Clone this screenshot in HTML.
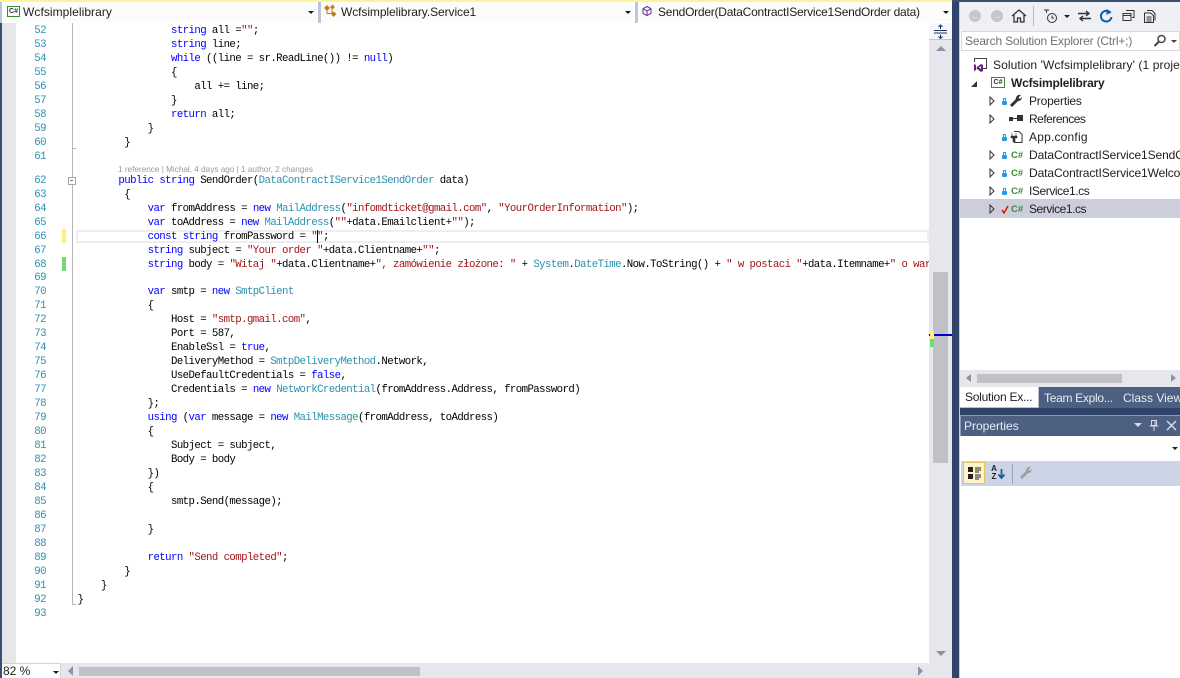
<!DOCTYPE html>
<html><head><meta charset="utf-8"><style>
html,body{margin:0;padding:0;background:#fff}
#r{position:relative;width:1180px;height:678px;overflow:hidden;background:#fff;font-family:"Liberation Sans",sans-serif}
.a{position:absolute}
.ui{position:absolute;font-size:12px;white-space:nowrap;color:#1e1e1e;line-height:16px}
#code{position:absolute;left:77.5px;top:25px;width:852px;height:638px;overflow:hidden;font-family:"Liberation Mono",monospace;font-size:10.7px;letter-spacing:-.57px;line-height:13.97px;white-space:pre;color:#000}
#nums{position:absolute;left:16px;top:25px;width:30px;text-align:right;font-family:"Liberation Mono",monospace;font-size:10.7px;letter-spacing:-.52px;line-height:13.97px;white-space:pre;color:#2b91af}
.k{color:#0000ff}.t{color:#2b91af}.s{color:#a31515}
.lens{height:10px;padding-left:40.5px;font:8.2px/10px "Liberation Sans",sans-serif;letter-spacing:0;color:#999}
.combo{position:absolute;top:2px;height:19px;background:#fcfcfd;border:1px solid #fff}
.drop{position:absolute;width:0;height:0;border-left:3px solid transparent;border-right:3px solid transparent;border-top:3px solid #1e1e1e}
.exp{position:absolute;left:989px}
.lock{position:absolute;left:1002px;width:5px;height:4px;background:#1f9ce8;border-radius:1px}
.lock:before{content:"";position:absolute;left:1px;top:-3px;width:1px;height:2px;border:1px solid #1f9ce8;border-bottom:0}
.cs{position:absolute;left:1011px;font:bold 9.5px/12px "Liberation Sans",sans-serif;color:#388a34}
</style></head><body><div id="r">

<!-- top bar -->
<div class="a" style="left:0;top:0;width:952px;height:23px;background:#bcc6d9"></div>
<div class="a" style="left:0;top:0;width:952px;height:2px;background:#fff29d"></div>
<div class="combo" style="left:2px;width:314px"></div>
<div class="combo" style="left:321px;width:312px"></div>
<div class="combo" style="left:638px;width:312px"></div>
<div class="a" style="left:7px;top:6px;width:11px;height:9px;border:1px solid #388a34;font:bold 7px/9px 'Liberation Sans',sans-serif;color:#333;text-align:center">C#</div>
<div class="ui" style="left:23px;top:4px;letter-spacing:.06px">Wcfsimplelibrary</div>
<div class="drop" style="left:308px;top:11px"></div>
<svg class="a" style="left:324px;top:4px" width="14" height="14" viewBox="0 0 14 14"><path d="M0 4l3-3 3 3-3 3zM6 3l2.500-2.500L11 3 8.500 5.500zM7 10l2.500-2.500L12.500 10 9.500 13z" fill="#c27d1a"/><path d="M3 6v3.500h5M8 4v5" stroke="#c27d1a" fill="none"/></svg>
<div class="ui" style="left:341px;top:4px;letter-spacing:-.08px">Wcfsimplelibrary.Service1</div>
<div class="drop" style="left:625px;top:11px"></div>
<svg class="a" style="left:641px;top:5px" width="12" height="12" viewBox="0 0 12 12"><path d="M6 1.500l4 2.200v4.600l-4 2.200-4-2.200V3.700zM2 3.700l4 2.300 4-2.300M6 6v4.500" fill="none" stroke="#652d90" stroke-width="1"/></svg>
<div class="ui" style="left:658px;top:4px;letter-spacing:-.24px">SendOrder(DataContractIService1SendOrder data)</div>
<div class="drop" style="left:943px;top:11px"></div>

<!-- gutter -->
<div class="a" style="left:0;top:23px;width:2px;height:655px;background:#3b4f72"></div>
<div class="a" style="left:2px;top:23px;width:14px;height:640px;background:#e6e7e8"></div>
<div class="a" style="left:72px;top:23px;width:1px;height:582px;background:#b5b5b5"></div>
<div class="a" style="left:72px;top:148px;width:4px;height:1px;background:#b5b5b5"></div>
<div class="a" style="left:73px;top:604px;width:3px;height:1px;background:#b5b5b5"></div>
<div class="a" style="left:68px;top:177px;width:6px;height:6px;background:#fff;border:1px solid #a5a5a5"></div>
<div class="a" style="left:70px;top:180px;width:3px;height:1px;background:#777"></div>
<div class="a" style="left:62px;top:229px;width:4px;height:14px;background:#fff176"></div>
<div class="a" style="left:62px;top:257px;width:4px;height:14px;background:#6fdc6f"></div>
<div class="a" style="left:76px;top:230px;width:849px;height:9px;border:2px solid #eeeef2"></div>

<div id="nums">52
53
54
55
56
57
58
59
60
61
<div style="height:10px"></div>62
63
64
65
66
67
68
69
70
71
72
73
74
75
76
77
78
79
80
81
82
83
84
85
86
87
88
89
90
91
92
93</div>

<div id="code">                <span class="k">string</span> all =<span class="s">""</span>;
                <span class="k">string</span> line;
                <span class="k">while</span> ((line = sr.ReadLine()) != <span class="k">null</span>)
                {
                    all += line;
                }
                <span class="k">return</span> all;
            }
        }

<div class="lens">1 reference | Michał, 4 days ago | 1 author, 2 changes</div>       <span class="k">public</span> <span class="k">string</span> SendOrder(<span class="t">DataContractIService1SendOrder</span> data)
        {
            <span class="k">var</span> fromAddress = <span class="k">new</span> <span class="t">MailAddress</span>(<span class="s">"infomdticket@gmail.com"</span>, <span class="s">"YourOrderInformation"</span>);
            <span class="k">var</span> toAddress = <span class="k">new</span> <span class="t">MailAddress</span>(<span class="s">""</span>+data.Emailclient+<span class="s">""</span>);
            <span class="k">const</span> <span class="k">string</span> fromPassword = <span class="s">""</span>;
            <span class="k">string</span> subject = <span class="s">"Your order "</span>+data.Clientname+<span class="s">""</span>;
            <span class="k">string</span> body = <span class="s">"Witaj "</span>+data.Clientname+<span class="s">", zamówienie złożone: "</span> + <span class="t">System</span>.<span class="t">DateTime</span>.Now.ToString() + <span class="s">" w postaci "</span>+data.Itemname+<span class="s">" o wartości"</span>;

            <span class="k">var</span> smtp = <span class="k">new</span> <span class="t">SmtpClient</span>
            {
                Host = <span class="s">"smtp.gmail.com"</span>,
                Port = 587,
                EnableSsl = <span class="k">true</span>,
                DeliveryMethod = <span class="t">SmtpDeliveryMethod</span>.Network,
                UseDefaultCredentials = <span class="k">false</span>,
                Credentials = <span class="k">new</span> <span class="t">NetworkCredential</span>(fromAddress.Address, fromPassword)
            };
            <span class="k">using</span> (<span class="k">var</span> message = <span class="k">new</span> <span class="t">MailMessage</span>(fromAddress, toAddress)
            {
                Subject = subject,
                Body = body
            })
            {
                smtp.Send(message);

            }

            <span class="k">return</span> <span class="s">"Send completed"</span>;
        }
    }
}
</div>
<div class="a" style="left:317px;top:230px;width:1px;height:13px;background:#000"></div>

<!-- editor vertical scrollbar -->
<div class="a" style="left:929px;top:23px;width:23px;height:655px;background:#e6e7ec"></div>
<div class="a" style="left:929px;top:23px;width:23px;height:17px;background:#f4f6fb;border-bottom:1px solid #bcc6d9;box-sizing:border-box"></div>
<svg class="a" style="left:933px;top:24px" width="15" height="15" viewBox="0 0 15 15"><path d="M1 6.500h13M1 9h13M7.500 1v4M7.500 10.500v4M5.500 3l2-2 2 2M5.500 12.500l2 2 2-2" stroke="#1f3b5c" fill="none"/></svg>
<div class="a" style="left:936px;top:46px;border-left:5px solid transparent;border-right:5px solid transparent;border-bottom:5px solid #8f90a2"></div>
<div class="a" style="left:933px;top:272px;width:15px;height:191px;background:#c0c1c6"></div>
<div class="a" style="left:929px;top:334px;width:23px;height:2px;background:#0000d0"></div>
<div class="a" style="left:930px;top:331px;width:4px;height:8px;background:#fff176"></div>
<div class="a" style="left:930px;top:339px;width:4px;height:8px;background:#6fdc6f"></div>
<div class="a" style="left:936px;top:651px;border-left:5px solid transparent;border-right:5px solid transparent;border-top:5px solid #8f90a2"></div>

<!-- editor bottom -->
<div class="a" style="left:2px;top:663px;width:950px;height:15px;background:#e6e7ec"></div>
<div class="a" style="left:2px;top:663px;width:59px;height:15px;background:#fff;box-sizing:border-box;border-top:1px solid #ccd5e6;border-right:1px solid #ccd5e6"></div>
<div class="ui" style="left:3px;top:664px;line-height:15px">82 %</div>
<div class="drop" style="left:53px;top:671px"></div>
<div class="a" style="left:68px;top:666px;border-top:5px solid transparent;border-bottom:5px solid transparent;border-right:5px solid #8f90a2"></div>
<div class="a" style="left:79px;top:667px;width:341px;height:9px;background:#c0c1c6"></div>
<div class="a" style="left:918px;top:666px;border-top:5px solid transparent;border-bottom:5px solid transparent;border-left:5px solid #8f90a2"></div>

<!-- splitter -->
<div class="a" style="left:952px;top:0;width:7px;height:678px;background:#2f4468"></div>
<div class="a" style="left:959px;top:0;width:1px;height:678px;background:#c5cfe2"></div>

<!-- solution explorer toolbar -->
<div class="a" style="left:960px;top:0;width:220px;height:31px;background:#eef0f6"></div>
<div class="a" style="left:952px;top:0;width:228px;height:2px;background:#3b4f72"></div>
<div class="a" style="left:969px;top:10px;width:12px;height:12px;border-radius:50%;background:#c5c7cc;color:#eef0f6;font:bold 9px/12px 'Liberation Sans',sans-serif;text-align:center">←</div>
<div class="a" style="left:991px;top:10px;width:12px;height:12px;border-radius:50%;background:#c5c7cc;color:#eef0f6;font:bold 9px/12px 'Liberation Sans',sans-serif;text-align:center">→</div>
<svg class="a" style="left:1011px;top:8px" width="16" height="16" viewBox="0 0 16 16"><path d="M1 8l7-6 7 6M3 7v7h3.500v-4h3v4H13V7" fill="none" stroke="#333" stroke-width="1.300"/></svg>
<div class="a" style="left:1033px;top:6px;width:1px;height:20px;background:#b5b8c2"></div>
<svg class="a" style="left:1043px;top:8px" width="16" height="16" viewBox="0 0 16 16"><circle cx="9" cy="10" r="4.500" fill="none" stroke="#333"/><path d="M9 7.500V10h2M1 2h5M3.500 2v3" fill="none" stroke="#333"/></svg>
<div class="drop" style="left:1064px;top:15px"></div>
<svg class="a" style="left:1077px;top:9px" width="15" height="14" viewBox="0 0 15 14"><path d="M1 4.500h11M9 2l3 2.500L9 7M14 9.500H3M6 7L3 9.500 6 12" fill="none" stroke="#333" stroke-width="1.400"/></svg>
<svg class="a" style="left:1098px;top:8px" width="16" height="16" viewBox="0 0 16 16"><path d="M12.500 5a5.300 5.300 0 1 0 1 4" fill="none" stroke="#0e5fa8" stroke-width="2"/><path d="M8.500 1v6l5-3z" fill="#0e5fa8"/></svg>
<svg class="a" style="left:1122px;top:9px" width="13" height="13" viewBox="0 0 13 13"><path d="M4 1.500h8v7h-2M1 4.500h8v7H1zM1 6.500h8" fill="none" stroke="#333"/></svg>
<svg class="a" style="left:1143px;top:9px" width="15" height="15" viewBox="0 0 15 15"><path d="M4 1.500h5l3 3v7M1.500 4h6l3 2.500v7h-9zM3.500 8h5M3.500 10h5M3.500 12h5" fill="none" stroke="#333"/></svg>

<!-- search -->
<div class="a" style="left:961px;top:31px;width:219px;height:20px;background:#fff;border:1px solid #d5d9e3;box-sizing:border-box"></div>
<div class="ui" style="left:965px;top:33px;color:#717171;letter-spacing:-.18px">Search Solution Explorer (Ctrl+;)</div>
<svg class="a" style="left:1153px;top:34px" width="14" height="14" viewBox="0 0 14 14"><circle cx="8.500" cy="5" r="3.500" fill="none" stroke="#444" stroke-width="1.500"/><path d="M6 7.500L1.500 12" stroke="#444" stroke-width="2"/></svg>
<div class="drop" style="left:1171px;top:40px;border-top-color:#444"></div>

<!-- tree -->
<div class="a" style="left:960px;top:199px;width:220px;height:19px;background:#cccedb"></div>
<svg class="a" style="left:973px;top:57px" width="15" height="15" viewBox="0 0 15 15"><path d="M1.500 5V1.500h12v10H10" fill="none" stroke="#444"/><path d="M1 7v7l2-1V8zM3.500 10.500L8 7l2 1v6l-2 1-4.500-3.500zM6 10.500l2 1.500V9z" fill="#68217a" fill-rule="evenodd"/></svg>
<div class="ui" style="left:993px;top:57px;letter-spacing:.1px">Solution 'Wcfsimplelibrary' (1 project)</div>
<div class="a" style="left:971px;top:81px;border-left:6px solid transparent;border-bottom:6px solid #333"></div>
<div class="a" style="left:991px;top:77px;width:12px;height:9px;border:1px solid #388a34;font:bold 7px/9px 'Liberation Sans',sans-serif;color:#333;text-align:center">C#</div>
<div class="ui" style="left:1011px;top:75px;font-weight:bold;letter-spacing:-.2px">Wcfsimplelibrary</div>

<svg class="exp" style="top:96px" width="7" height="10" viewBox="0 0 7 10"><path d="M1 1l4 4-4 4z" fill="none" stroke="#333"/></svg>
<div class="lock" style="top:101px"></div>
<svg class="a" style="left:1009px;top:94px" width="14" height="14" viewBox="0 0 14 14"><path d="M2 12l6-6" stroke="#333" stroke-width="3"/><path d="M7 6a4 4 0 0 1 5-5L9.500 3.500l1.500 1.500L13 3a4 4 0 0 1-5 4z" fill="#333"/></svg>
<div class="ui" style="left:1029px;top:93px;letter-spacing:-.2px">Properties</div>

<svg class="exp" style="top:114px" width="7" height="10" viewBox="0 0 7 10"><path d="M1 1l4 4-4 4z" fill="none" stroke="#333"/></svg>
<div class="a" style="left:1009px;top:117px;width:4px;height:4px;background:#333"></div>
<div class="a" style="left:1013px;top:118px;width:4px;height:1px;background:#333"></div>
<div class="a" style="left:1017px;top:115px;width:6px;height:6px;background:#333"></div>
<div class="ui" style="left:1029px;top:111px;letter-spacing:-.5px">References</div>

<div class="lock" style="top:137px"></div>
<svg class="a" style="left:1009px;top:130px" width="15" height="14" viewBox="0 0 15 14"><path d="M5 1.500h5l3 3v8H5" fill="none" stroke="#333"/><path d="M3 3v3.500M7 3v3.500M2 6h6v2H6v4H4V8H2z" fill="#333" stroke="#333" stroke-width=".6"/></svg>
<div class="ui" style="left:1029px;top:129px;letter-spacing:.2px">App.config</div>

<svg class="exp" style="top:150px" width="7" height="10" viewBox="0 0 7 10"><path d="M1 1l4 4-4 4z" fill="none" stroke="#333"/></svg><div class="lock" style="top:155px"></div><div class="cs" style="top:150px">C#</div>
<div class="ui" style="left:1029px;top:147px;letter-spacing:-.1px">DataContractIService1SendOrder.cs</div>
<svg class="exp" style="top:168px" width="7" height="10" viewBox="0 0 7 10"><path d="M1 1l4 4-4 4z" fill="none" stroke="#333"/></svg><div class="lock" style="top:173px"></div><div class="cs" style="top:168px">C#</div>
<div class="ui" style="left:1029px;top:165px;letter-spacing:-.1px">DataContractIService1WelcomeMessage.cs</div>
<svg class="exp" style="top:186px" width="7" height="10" viewBox="0 0 7 10"><path d="M1 1l4 4-4 4z" fill="none" stroke="#333"/></svg><div class="lock" style="top:191px"></div><div class="cs" style="top:186px">C#</div>
<div class="ui" style="left:1029px;top:183px;letter-spacing:-.42px">IService1.cs</div>
<svg class="exp" style="top:204px" width="7" height="10" viewBox="0 0 7 10"><path d="M1 1l4 4-4 4z" fill="none" stroke="#333"/></svg>
<svg class="a" style="left:1001px;top:205px" width="8" height="9" viewBox="0 0 8 9"><path d="M1 5l2 3 4-7" fill="none" stroke="#e51400" stroke-width="1.500"/></svg>
<div class="cs" style="top:204px">C#</div>
<div class="ui" style="left:1029px;top:201px;letter-spacing:-.45px">Service1.cs</div>

<!-- explorer h scrollbar -->
<div class="a" style="left:960px;top:370px;width:220px;height:17px;background:#e6e7ec"></div>
<div class="a" style="left:966px;top:374px;border-top:4px solid transparent;border-bottom:4px solid transparent;border-right:5px solid #8f90a2"></div>
<div class="a" style="left:977px;top:374px;width:145px;height:9px;background:#c0c1c6"></div>
<div class="a" style="left:1171px;top:374px;border-top:4px solid transparent;border-bottom:4px solid transparent;border-left:5px solid #8f90a2"></div>

<!-- tabs -->
<div class="a" style="left:960px;top:387px;width:220px;height:21px;background:#4d6082"></div>
<div class="a" style="left:960px;top:387px;width:78px;height:21px;background:#fff"></div>
<div class="a" style="left:1038px;top:387px;width:1px;height:21px;background:#b5c0d5"></div>
<div class="a" style="left:960px;top:407px;width:79px;height:1px;background:#b5c0d5"></div>
<div class="ui" style="left:965px;top:389px;letter-spacing:-.25px">Solution Ex...</div>
<div class="ui" style="left:1044px;top:390px;color:#e8ecf3;letter-spacing:-.3px">Team Explo...</div>
<div class="ui" style="left:1123px;top:390px;color:#e8ecf3">Class View</div>
<div class="a" style="left:960px;top:408px;width:220px;height:7px;background:#2f4468"></div>

<!-- properties -->
<div class="a" style="left:960px;top:415px;width:220px;height:21px;background:#4d6082;border-top:1px solid #8a9ab8;border-left:1px solid #8a9ab8;box-sizing:border-box"></div>
<div class="ui" style="left:964px;top:418px;color:#e8ecf3">Properties</div>
<div class="drop" style="left:1134px;top:423px;border-left-width:4px;border-right-width:4px;border-top:4px solid #d5dbe6"></div>
<svg class="a" style="left:1148px;top:419px" width="12" height="13" viewBox="0 0 12 13"><path d="M3.500 1.500h5v5h-5zM1.500 7h9M6 7v5M7 2v4" fill="none" stroke="#d5dbe6"/></svg>
<svg class="a" style="left:1166px;top:420px" width="11" height="11" viewBox="0 0 11 11"><path d="M1 1l9 9M10 1l-9 9" stroke="#d5dbe6" stroke-width="1.500"/></svg>
<div class="drop" style="left:1172px;top:447px"></div>

<div class="a" style="left:961px;top:461px;width:219px;height:25px;background:#ccd5e6"></div>
<div class="a" style="left:963px;top:462px;width:22px;height:22px;background:#fff4c8;border:1px solid #e5c365;box-sizing:border-box"></div>
<svg class="a" style="left:967px;top:466px" width="15" height="14" viewBox="0 0 15 14"><path d="M1 1h5v5H1zM1 8h5v5H1z" fill="#222"/><path d="M8 2h6M8 4h6M8 6h4M8 9h6M8 11h6M8 13h4" stroke="#222"/></svg>
<div class="a" style="left:989px;top:465px;font:bold 8px/8px 'Liberation Sans',sans-serif;color:#222;width:10px;text-align:center">A<br>Z</div>
<svg class="a" style="left:997px;top:466px" width="9" height="14" viewBox="0 0 9 14"><path d="M4.500 3v9M1.500 8.500L4.500 12l3-3.500" fill="none" stroke="#0e5fa8" stroke-width="1.800"/></svg>
<div class="a" style="left:1012px;top:464px;width:1px;height:20px;background:#9aa3b5"></div>
<svg class="a" style="left:1019px;top:466px" width="14" height="14" viewBox="0 0 14 14"><path d="M2 12l6-6" stroke="#a0a0a0" stroke-width="3"/><path d="M7 6a4 4 0 0 1 5-5L9.500 3.500l1.500 1.500L13 3a4 4 0 0 1-5 4z" fill="#a0a0a0"/></svg>

</div></body></html>
